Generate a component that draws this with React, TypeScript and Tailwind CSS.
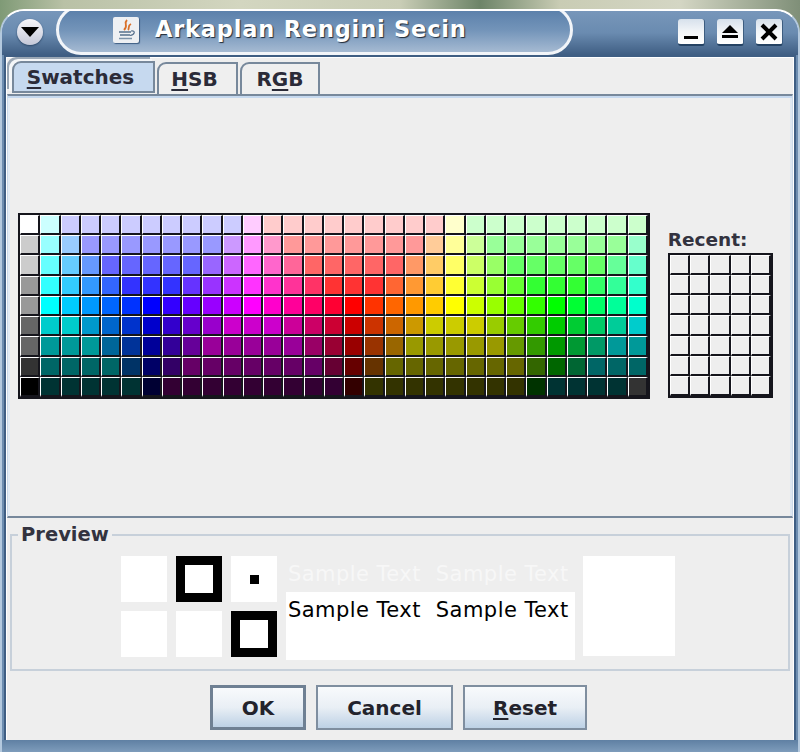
import React from "react";

const MAIN = [
  "ffffff ccffff ccccff*9 ffccff ffcccc*9 ffffcc ccffcc*9",
  "cccccc 99ffff 99ccff 9999ff*7 cc99ff ff99ff ff99cc ff9999*7 ffcc99 ffff99 ccff99 99ff99*7 99ffcc",
  "cccccc 66ffff 66ccff 6699ff 6666ff*5 9966ff cc66ff ff66ff ff66cc ff6699 ff6666*5 ff9966 ffcc66 ffff66 ccff66 99ff66 66ff66*5 66ff99 66ffcc",
  "999999 33ffff 33ccff 3399ff 3366ff 3333ff*3 6633ff 9933ff cc33ff ff33ff ff33cc ff3399 ff3366 ff3333*3 ff6633 ff9933 ffcc33 ffff33 ccff33 99ff33 66ff33 33ff33*3 33ff66 33ff99 33ffcc",
  "999999 00ffff 00ccff 0099ff 0066ff 0033ff 0000ff 3300ff 6600ff 9900ff cc00ff ff00ff ff00cc ff0099 ff0066 ff0033 ff0000 ff3300 ff6600 ff9900 ffcc00 ffff00 ccff00 99ff00 66ff00 33ff00 00ff00 00ff33 00ff66 00ff99 00ffcc",
  "666666 00cccc*2 0099cc 0066cc 0033cc 0000cc 3300cc 6600cc 9900cc cc00cc*3 cc0099 cc0066 cc0033 cc0000 cc3300 cc6600 cc9900 cccc00*3 99cc00 66cc00 33cc00 00cc00 00cc33 00cc66 00cc99 00cccc",
  "666666 009999*3 006699 003399 000099 330099 660099 990099*5 990066 990033 990000 993300 996600 999900*5 669900 339900 009900 009933 009966 009999*2",
  "333333 006666*4 003366 000066 330066 660066*7 660033 660000 663300 666600*7 336600 006600 006633 006666*3",
  "000000 003333*5 000033 330033*9 330000 333300*8 003300 003333*4 333333",
];

const expand = (row: string) =>
  row.split(" ").flatMap((token) => {
    const [color, count] = token.split("*");
    return Array.from({ length: Number(count ?? 1) }, () => `#${color}`);
  });

const mainColors = MAIN.flatMap(expand);
const recentColors = Array.from({ length: 35 }, () => "#eeeeee");

function Cell({ color }: { color: string }) {
  return (
    <div
      className="h-[20.25px] w-[20.25px] border-t border-l border-t-white border-l-white border-r-2 border-b-2 border-r-[#15151c] border-b-[#15151c]"
      style={{ backgroundColor: color }}
    />
  );
}

function Tab({
  before,
  mnemonic,
  after,
  selected,
  className,
}: {
  before: string;
  mnemonic: string;
  after: string;
  selected?: boolean;
  className: string;
}) {
  return (
    <div
      className={`flex h-[32px] items-center justify-center rounded-tl-[9px] border-t-2 border-l-2 border-r-2 border-[#77889b] text-[20px] font-bold leading-none text-[#2b2b38] ${
        selected ? "bg-[#c6d9ef] border-b-2 shadow-[-3px_-2px_0_0_#f4f6f8,-5px_-4px_0_0_#9aa7b5]" : "bg-[#efefef]"
      } ${className}`}
    >
      <span>
        {before}
        <span className="underline decoration-2 underline-offset-[3px]">{mnemonic}</span>
        {after}
      </span>
    </div>
  );
}

function DialogButton({ className, children }: { className: string; children: React.ReactNode }) {
  return (
    <div
      className={`flex h-[45px] items-center justify-center bg-gradient-to-b from-[#f8fafc] via-[#e9eff5] to-[#bdd1e5] text-[20px] font-bold text-[#23232c] ${className}`}
    >
      {children}
    </div>
  );
}

function WinButton({ children }: { children: React.ReactNode }) {
  return (
    <div className="flex h-[27px] w-[27px] items-center justify-center rounded-[3px] border-b-2 border-r border-b-[#244263] border-r-[#3d5d80] bg-gradient-to-b from-[#d7e1ec] via-[#f2f5f8] to-[#ffffff]">
      {children}
    </div>
  );
}

const WhiteBox = () => <div className="h-[46px] w-[46px] bg-white" />;
const Ring = () => <div className="h-[46px] w-[46px] border-[9px] border-black bg-white" />;

export default function App() {
  const ui = { fontFamily: '"DejaVu Sans", sans-serif' };
  return (
    <div
      className="h-[752px] w-[800px] overflow-hidden bg-[linear-gradient(90deg,#7f9a76_0%,#b9c1a6_8%,#d3d6c0_30%,#c9cdb6_50%,#6d8468_60%,#c9ccb4_70%,#d4d6c4_85%,#7f8f78_100%)] pt-[9px]"
      style={ui}
    >
      <div className="flex h-[743px] w-[800px] flex-col overflow-hidden rounded-t-[24px] border-t-2 border-l-2 border-r-2 border-t-white border-l-[#b4c9de] border-r-[#b4c9de] bg-[#6d8db0]">
        {/* title bar */}
        <div className="flex h-[44px] flex-none items-start bg-gradient-to-b from-[#7796ba] via-[#6a8bb0] to-[#3f5e83] pl-[15px]">
          <div className="mt-[8px] flex h-[26px] w-[26px] flex-none items-center justify-center rounded-full bg-gradient-to-b from-[#f6f6fa] to-[#c4c8d8] shadow-[0_1px_2px_#2c4767]">
            <svg width="18" height="10" viewBox="0 0 18 10">
              <path d="M0 0 H18 L9 10 Z" fill="#000" />
            </svg>
          </div>
          <div className="relative z-10 ml-[13px] -mt-[6px] flex h-[50px] w-[517px] flex-none items-center rounded-[25px] border-[3px] border-[#f2f5f9] bg-gradient-to-b from-[#587ea9] via-[#7394b9] to-[#a5bad2] pl-[54px]">
            <div className="flex h-[26px] w-[26px] flex-none items-center justify-center rounded-[2px] bg-[#eef0f3] shadow-[1px_1px_1px_#3f5e83]">
              <svg width="22" height="22" viewBox="0 0 22 22" fill="none">
                <path d="M12 1 C8 5 14 6 9 11 M16 5 C12 7 15 9 13 11" stroke="#d9702a" strokeWidth="1.8" />
                <path d="M4 13 H16 M5 16 H15" stroke="#56708d" strokeWidth="1.6" />
                <path d="M4 19.5 H17" stroke="#7d93aa" strokeWidth="1.4" />
                <path d="M16 12 C21 11 20 16 15 16.5" stroke="#56708d" strokeWidth="1.2" />
              </svg>
            </div>
            <span className="ml-[16px] -mt-[1px] text-[22.5px] font-bold leading-none tracking-[0.8px] text-white [text-shadow:1px_1px_1px_#1f2a38] whitespace-nowrap">
              Arkaplan Rengini Secin
            </span>
          </div>
          <div className="mt-[8px] ml-[105px] flex gap-[12px]">
            <WinButton>
              <svg width="16" height="16" viewBox="0 0 16 16">
                <rect x="1" y="12" width="14" height="3" fill="#000" />
              </svg>
            </WinButton>
            <WinButton>
              <svg width="18" height="16" viewBox="0 0 18 16">
                <path d="M9 1 L17 9 H1 Z M1 11 H17 V14 H1 Z" fill="#000" />
              </svg>
            </WinButton>
            <WinButton>
              <svg width="18" height="18" viewBox="0 0 18 18">
                <path d="M2 2 L16 16 M16 2 L2 16" stroke="#000" strokeWidth="4" />
              </svg>
            </WinButton>
          </div>
        </div>

        {/* client area */}
        <div className="mx-[2px] flex min-h-0 flex-1 flex-col border-t-2 border-t-[#3f5e83] border-x-2 border-x-[#3f5e83] bg-white">
          <div className="m-[1px] mb-0 flex min-h-0 flex-1 flex-col bg-[#eeeeee]">
            {/* tabs */}
            <div className="flex h-[36px] flex-none items-end gap-[2px] pl-[5px]">
              <Tab before="" mnemonic="S" after="watches" selected className="w-[143px] -translate-y-[1px] pr-[6px]" />
              <Tab before="" mnemonic="H" after="SB" className="w-[81px] pr-[6px]" />
              <Tab before="R" mnemonic="G" after="B" className="w-[80px]" />
            </div>
            {/* swatch panel */}
            <div className="flex h-[424px] flex-none items-center gap-[18px] border-t-2 border-b-2 border-r border-l border-t-[#77889b] border-b-[#77889b] border-l-[#c9d8e8] border-r-[#c9d8e8] pl-[10px] shadow-[inset_0_2px_0_#c6d9ef,inset_2px_0_0_#e4ecf4,inset_-2px_0_0_#dde7f1]">
              <div className="grid grid-cols-[repeat(31,20.25px)] border-2 border-[#15151c] bg-white">
                {mainColors.map((c, i) => (
                  <Cell key={i} color={c} />
                ))}
              </div>
              <div className="flex flex-col pt-[15px]">
                <div className="mb-[2px] text-[18.5px] font-bold leading-[22px] text-[#33333f]">Recent:</div>
                <div className="grid grid-cols-[repeat(5,20.25px)] border-2 border-[#15151c] bg-white">
                  {recentColors.map((c, i) => (
                    <Cell key={i} color={c} />
                  ))}
                </div>
              </div>
            </div>
            {/* preview */}
            <div className="relative mx-[3px] mt-[16px] flex h-[137px] flex-none items-center border-2 border-[#c7d0da] pl-[109px] pt-[11px]">
              <span className="absolute -top-[13px] left-[6px] bg-[#eeeeee] px-[3px] text-[19.5px] font-bold leading-[24px] text-[#33333f]">
                Preview
              </span>
              <div className="flex items-start gap-[9px]">
                <div className="grid grid-cols-[46px_46px_46px] gap-x-[9px] gap-y-[9px]">
                  <WhiteBox />
                  <Ring />
                  <div className="flex h-[46px] w-[46px] items-center justify-center bg-white">
                    <div className="h-[9px] w-[9px] bg-black" />
                  </div>
                  <WhiteBox />
                  <WhiteBox />
                  <Ring />
                </div>
                <div className="flex w-[289px] flex-col">
                  <div className="flex h-[36px] items-center gap-[15px] whitespace-nowrap pl-[2px] text-[21px] leading-none tracking-[0.45px] text-[#f7f7f7]">
                    <span>Sample Text</span>
                    <span>Sample Text</span>
                  </div>
                  <div className="flex h-[35px] items-center gap-[15px] whitespace-nowrap bg-white pl-[2px] pt-[2px] text-[21px] leading-none tracking-[0.45px] text-black">
                    <span>Sample Text</span>
                    <span>Sample Text</span>
                  </div>
                  <div className="h-[33px] bg-white" />
                </div>
                <div className="-ml-[1px] h-[100px] w-[92px] bg-white" />
              </div>
            </div>
            {/* buttons */}
            <div className="flex flex-1 items-start gap-[10px] pl-[203px] pt-[14px]">
              <DialogButton className="w-[96px] border-[3px] border-[#6f8093]">OK</DialogButton>
              <DialogButton className="w-[137px] border-2 border-[#7f8e9f]">Cancel</DialogButton>
              <DialogButton className="w-[124px] border-2 border-[#7f8e9f]">
                <span>
                  <span className="underline decoration-2 underline-offset-[3px]">R</span>eset
                </span>
              </DialogButton>
            </div>
          </div>
        </div>
        {/* bottom frame */}
        <div className="h-[12px] flex-none bg-gradient-to-b from-[#5f80a3] to-[#7e9cbb]" />
      </div>
    </div>
  );
}
